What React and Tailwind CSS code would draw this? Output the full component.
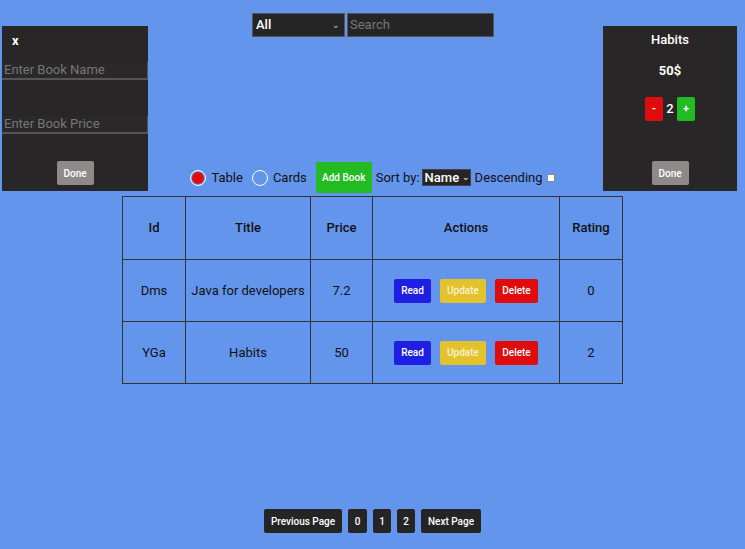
import React from "react";

const font = { fontFamily: "Roboto, 'Noto Sans', sans-serif" };

function Radio({ checked }) {
  return (
    <span className="inline-flex h-[16px] w-[16px] shrink-0 items-center justify-center rounded-full border border-white bg-transparent">
      {checked && <span className="h-[12px] w-[12px] rounded-full bg-[#e00b0b]" />}
    </span>
  );
}

function ActionButtons() {
  return (
    <div className="flex items-center justify-center gap-[9px]">
      <button className="h-[24px] w-[37px] rounded-[2px] bg-[#1f1fe3] text-[10px] font-medium text-white">Read</button>
      <button className="h-[24px] w-[46px] rounded-[2px] bg-[#e4c22e] text-[10px] font-medium text-[#fbf3d0]">Update</button>
      <button className="h-[24px] w-[43px] rounded-[2px] bg-[#e00b0b] text-[10px] font-medium text-white">Delete</button>
    </div>
  );
}

export default function App() {
  const rows = [
    { id: "Dms", title: "Java for developers", price: "7.2", rating: "0" },
    { id: "YGa", title: "Habits", price: "50", rating: "2" },
  ];
  return (
    <div className="relative h-[549px] w-[745px] overflow-hidden bg-[#6495ed] text-[13px] text-[#111]" style={font}>
      {/* Top bar */}
      <div className="flex justify-center gap-[2px] pl-[1px] pt-[13px]">
        <div className="relative flex h-[24px] w-[93px] items-center border border-[#555] bg-[#252525] pl-[3px] text-[13px] font-medium text-white">
          All
          <span className="absolute right-[4px] top-[5px] text-[9px] text-[#ccc]">⌄</span>
        </div>
        <div className="flex h-[24px] w-[147px] items-center border border-[#555] bg-[#252525] pl-[2px] text-[13px] text-[#777]">
          Search
        </div>
      </div>

      {/* Controls row */}
      <div className="mt-[125px] flex items-center justify-center">
        <Radio checked />
        <span className="ml-[5px] text-[13px] text-[#111]">Table</span>
        <span className="ml-[9px] flex"><Radio /></span>
        <span className="ml-[5px] text-[13px] text-[#111]">Cards</span>
        <button className="ml-[9px] h-[31px] w-[56px] bg-[#22bb22] text-[10px] font-medium text-white">Add Book</button>
        <span className="ml-[4px] text-[13px] text-[#111]">Sort by:</span>
        <div className="ml-[2px] flex h-[17px] w-[49px] items-center border border-[#444] bg-[#252525] pl-[2px] text-[13px] font-medium text-white">
          Name<span className="ml-[3px] text-[9px] leading-none">⌄</span>
        </div>
        <span className="ml-[4px] text-[13px] text-[#111]">Descending</span>
        <span className="ml-[4px] h-[8px] w-[8px] border border-[#888] bg-white" />
      </div>

      {/* Table */}
      <div className="mt-[3px] flex justify-center">
        <table className="border-collapse text-center">
          <thead>
            <tr className="h-[63px]">
              <th className="w-[63px] border border-[#333] font-medium">Id</th>
              <th className="w-[125px] border border-[#333] font-medium">Title</th>
              <th className="w-[62px] border border-[#333] font-medium">Price</th>
              <th className="w-[187px] border border-[#333] font-medium">Actions</th>
              <th className="w-[63px] border border-[#333] font-medium">Rating</th>
            </tr>
          </thead>
          <tbody>
            {rows.map((r) => (
              <tr key={r.id} className="h-[62px]">
                <td className="border border-[#333]">{r.id}</td>
                <td className="border border-[#333]">{r.title}</td>
                <td className="border border-[#333]">{r.price}</td>
                <td className="border border-[#333]"><ActionButtons /></td>
                <td className="border border-[#333]">{r.rating}</td>
              </tr>
            ))}
          </tbody>
        </table>
      </div>

      {/* Pagination */}
      <div className="absolute bottom-[16px] left-0 right-0 flex justify-center gap-[6px]">
        <button className="h-[24px] w-[78px] rounded-[2px] bg-[#252525] text-[10px] font-medium text-white">Previous Page</button>
        <button className="h-[24px] w-[19px] rounded-[2px] bg-[#252525] text-[10px] font-medium text-white">0</button>
        <button className="h-[24px] w-[18px] rounded-[2px] bg-[#252525] text-[10px] font-medium text-white">1</button>
        <button className="h-[24px] w-[18px] rounded-[2px] bg-[#252525] text-[10px] font-medium text-white">2</button>
        <button className="h-[24px] w-[60px] rounded-[2px] bg-[#252525] text-[10px] font-medium text-white">Next Page</button>
      </div>

      {/* Left modal */}
      <div className="absolute left-[2px] top-[26px] flex h-[165px] w-[146px] flex-col bg-[#282626]">
        <div className="pl-[10px] pt-[7px] text-[13px] font-bold leading-[16px] text-white">x</div>
        <div className="mt-[13px] h-[18px] w-full border-b-2 border-r border-[#555] bg-[#2a2828] pl-[2px] text-[13px] leading-[16px] text-[#777]">Enter Book Name</div>
        <div className="mt-[36px] h-[18px] w-full border-b-2 border-r border-[#555] bg-[#2a2828] pl-[2px] text-[13px] leading-[16px] text-[#777]">Enter Book Price</div>
        <div className="mt-[27px] flex justify-center">
          <button className="h-[24px] w-[37px] rounded-[2px] bg-[#8e8a8a] text-[10px] font-medium text-white">Done</button>
        </div>
      </div>

      {/* Right modal */}
      <div className="absolute left-[603px] top-[26px] flex h-[165px] w-[134px] flex-col items-center bg-[#282626] text-white">
        <div className="pt-[6px] text-[13px] font-medium leading-[16px]">Habits</div>
        <div className="mt-[15px] text-[13px] font-bold leading-[16px]">50$</div>
        <div className="mt-[18px] flex items-center gap-[3px]">
          <button className="h-[24px] w-[18px] rounded-[2px] bg-[#e00b0b] text-[11px] font-bold text-white">-</button>
          <span className="w-[8px] text-center text-[13px] font-medium">2</span>
          <button className="h-[24px] w-[18px] rounded-[2px] bg-[#22bb22] text-[11px] font-bold text-white">+</button>
        </div>
        <div className="mt-[40px]">
          <button className="h-[24px] w-[37px] rounded-[2px] bg-[#8e8a8a] text-[10px] font-medium text-white">Done</button>
        </div>
      </div>
    </div>
  );
}
